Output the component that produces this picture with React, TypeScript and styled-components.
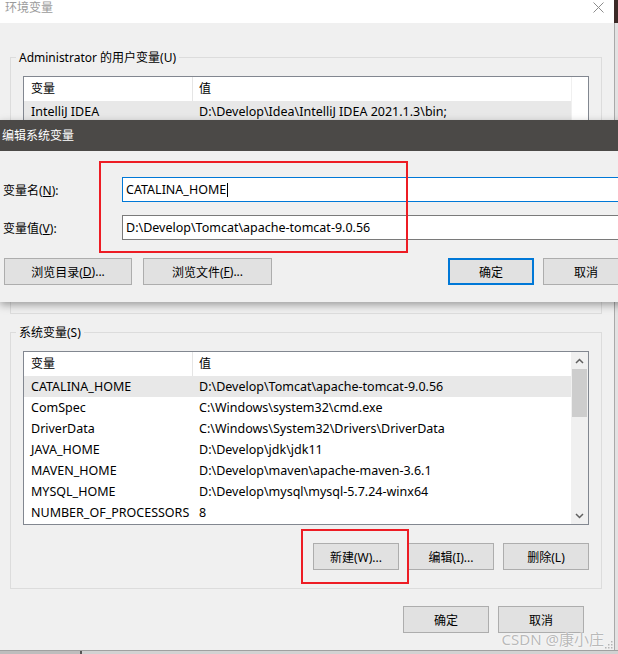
import React from 'react';
import styled, { createGlobalStyle } from 'styled-components';

const Global = createGlobalStyle`
  html, body { margin: 0; padding: 0; }
  body {
    width: 618px; height: 654px; overflow: hidden; background: #cfcfcf;
    font-family: "Noto Sans", "Noto Sans CJK SC", sans-serif;
    font-size: 12px; color: #000;
  }
  * { box-sizing: border-box; }
`;

const Screen = styled.div`
  position: relative;
  width: 618px;
  height: 654px;
  overflow: hidden;
  display: flex;
  flex-direction: column;
`;

const TopArea = styled.div`
  display: flex;
  height: 650px;
`;

const EnvWindow = styled.div`
  position: relative;
  width: 614px;
  display: flex;
  flex-direction: column;
  background: #f0f0f0;
`;

const EdgeStrip = styled.div`
  width: 4px;
  display: flex;
  flex-direction: column;
`;

const EdgeTop = styled.div`
  height: 23px;
  background: #3b2a27;
`;

const EdgeRest = styled.div`
  flex: 1;
  border-left: 1px solid #a9a9a9;
  background: #e2e2e2;
`;

const Taskbar = styled.div`
  height: 4px;
  display: flex;
  border-top: 1px solid #a0a0a0;
`;

const TaskLeft = styled.div`
  width: 80px;
  background: #bdbdbd;
`;

const TaskDivider = styled.div`
  width: 2px;
  background: #555;
`;

const TaskRest = styled.div`
  flex: 1;
  background: #d2d2d2;
`;

const TitleBar = styled.div`
  height: 23px;
  background: #fff;
  display: flex;
  justify-content: space-between;
  align-items: flex-start;
  padding: 0 10px 0 5px;
`;

const TitleText = styled.span`
  line-height: 15px;
  color: #9b9b9b;
`;

const CloseBtn = styled.span`
  margin-top: 2px;
  display: flex;
`;

const Body = styled.div`
  flex: 1;
  display: flex;
  flex-direction: column;
  padding: 0 12px 0 10px;
`;

const Group = styled.fieldset<{ $mt: number }>`
  margin: ${p => p.$mt}px 0 0 0;
  padding: 10px 12px 18px 12px;
  border: 1px solid #dcdcdc;
  min-width: 0;
  display: flex;
  flex-direction: column;
`;

const Legend = styled.legend`
  padding: 0 3px;
  margin-left: -7px;
  line-height: 17px;
  font-size: 12px;
`;

const ListBox = styled.div`
  height: 174px;
  border: 1px solid #828790;
  background: #fff;
  display: flex;
  overflow: hidden;
`;

const ListMain = styled.div`
  flex: 1;
  display: flex;
  flex-direction: column;
  min-width: 0;
`;

const HeaderRow = styled.div`
  height: 24px;
  display: grid;
  grid-template-columns: 169px 1fr;
  align-items: center;
  flex-shrink: 0;
`;

const HeaderCell = styled.div<{ $first?: boolean }>`
  height: 24px;
  line-height: 24px;
  padding-left: ${p => (p.$first ? 7 : 6)}px;
  border-right: ${p => (p.$first ? '1px solid #e5e5e5' : 'none')};
`;

const DataRow = styled.div<{ $selected?: boolean }>`
  height: 21px;
  line-height: 21px;
  display: grid;
  grid-template-columns: 169px 1fr;
  flex-shrink: 0;
  font-size: 12.5px;
  background: ${p => (p.$selected ? '#e8e8e8' : 'transparent')};
`;

const Cell = styled.div<{ $first?: boolean }>`
  padding-left: ${p => (p.$first ? 7 : 6)}px;
  white-space: nowrap;
  overflow: hidden;
`;

const ScrollCol = styled.div<{ $active: boolean }>`
  width: 17px;
  flex-shrink: 0;
  display: flex;
  flex-direction: column;
  background: ${p => (p.$active ? '#f0f0f0' : '#fff')};
  border-left: ${p => (p.$active ? 'none' : '1px solid #f0f0f0')};
`;

const ArrowBox = styled.div`
  height: 17px;
  display: flex;
  align-items: center;
  justify-content: center;
  flex-shrink: 0;
`;

const Thumb = styled.div`
  height: 48px;
  margin: 0 1px;
  background: #cdcdcd;
  flex-shrink: 0;
`;

const ScrollSpace = styled.div`
  flex: 1;
`;

const ButtonRow = styled.div<{ $mt: number; $mr?: number }>`
  display: flex;
  justify-content: flex-end;
  gap: 9px;
  margin-top: ${p => p.$mt}px;
  margin-right: ${p => p.$mr ?? 0}px;
`;

const HiddenButtonSpace = styled.div`
  height: 27px;
  margin-top: 18px;
`;

const WinButton = styled.div<{ $w: number; $primary?: boolean }>`
  width: ${p => p.$w}px;
  height: 27px;
  display: flex;
  align-items: center;
  justify-content: center;
  background: #e1e1e1;
  border: ${p => (p.$primary ? '2px solid #0078d7' : '1px solid #adadad')};
  white-space: nowrap;
`;

const Dialog = styled.div`
  position: absolute;
  top: 120px;
  left: 0;
  width: 640px;
  display: flex;
  flex-direction: column;
  box-shadow: 0 3px 8px rgba(0, 0, 0, 0.35);
  z-index: 2;
`;

const DialogTitle = styled.div`
  height: 31px;
  line-height: 31px;
  padding-left: 2px;
  background: #4b4947;
  color: #fff;
`;

const DialogBody = styled.div`
  height: 151px;
  background: #f0f0f0;
  padding: 26px 11px 16px 3px;
  display: flex;
  flex-direction: column;
`;

const FieldRow = styled.div<{ $mt?: number }>`
  display: flex;
  align-items: center;
  margin-top: ${p => p.$mt ?? 0}px;
`;

const FieldLabel = styled.div`
  width: 119px;
  flex-shrink: 0;
  white-space: nowrap;
`;

const TextBox = styled.div<{ $focused?: boolean }>`
  flex: 1;
  height: 25px;
  display: flex;
  align-items: center;
  padding: 0 3px;
  font-size: 12.5px;
  background: #fff;
  border: 1px solid ${p => (p.$focused ? '#0078d7' : '#7a7a7a')};
  white-space: nowrap;
`;

const Caret = styled.span`
  display: inline-block;
  width: 1px;
  height: 14px;
  margin-left: 1px;
  background: #000;
`;

const DialogButtons = styled.div`
  display: flex;
  justify-content: space-between;
  margin-top: 18px;
  padding-left: 1px;
`;

const BtnGroup = styled.div<{ $gap: number }>`
  display: flex;
  gap: ${p => p.$gap}px;
`;

const Highlight = styled.div<{ $x: number; $y: number; $w: number; $h: number }>`
  position: absolute;
  left: ${p => p.$x}px;
  top: ${p => p.$y}px;
  width: ${p => p.$w}px;
  height: ${p => p.$h}px;
  border: 2px solid #ed1c24;
  z-index: 3;
`;

const Watermark = styled.div`
  position: absolute;
  right: 14px;
  bottom: 6px;
  font-size: 15px;
  line-height: 18px;
  color: #b9b9b9;
  text-shadow: 0 0 2px #fff, 0 0 1px #fff;
  z-index: 4;
`;

const Grip = styled.div`
  position: absolute;
  right: 1px;
  bottom: 1px;
  display: flex;
`;

const ChevronUp = () => (
  <svg width="9" height="6" viewBox="0 0 9 6">
    <path d="M1 5 L4.5 1.5 L8 5" fill="none" stroke="#606060" strokeWidth="1.5" />
  </svg>
);

const ChevronDown = () => (
  <svg width="9" height="6" viewBox="0 0 9 6">
    <path d="M1 1 L4.5 4.5 L8 1" fill="none" stroke="#606060" strokeWidth="1.5" />
  </svg>
);

const CloseIcon = () => (
  <svg width="11" height="11" viewBox="0 0 11 11">
    <path d="M0.5 0.5 L10.5 10.5 M10.5 0.5 L0.5 10.5" stroke="#8c8c8c" strokeWidth="1" />
  </svg>
);

const GripIcon = () => (
  <svg width="9" height="9" viewBox="0 0 9 9">
    {[[7, 1], [7, 4], [4, 4], [7, 7], [4, 7], [1, 7]].map(([x, y], i) => (
      <rect key={i} x={x} y={y} width="1.5" height="1.5" fill="#b5b5b5" />
    ))}
  </svg>
);

type Row = { name: string; value: string; selected?: boolean };

const userRows: Row[] = [
  { name: 'IntelliJ IDEA', value: 'D:\\Develop\\Idea\\IntelliJ IDEA 2021.1.3\\bin;', selected: true },
];

const sysRows: Row[] = [
  { name: 'CATALINA_HOME', value: 'D:\\Develop\\Tomcat\\apache-tomcat-9.0.56', selected: true },
  { name: 'ComSpec', value: 'C:\\Windows\\system32\\cmd.exe' },
  { name: 'DriverData', value: 'C:\\Windows\\System32\\Drivers\\DriverData' },
  { name: 'JAVA_HOME', value: 'D:\\Develop\\jdk\\jdk11' },
  { name: 'MAVEN_HOME', value: 'D:\\Develop\\maven\\apache-maven-3.6.1' },
  { name: 'MYSQL_HOME', value: 'D:\\Develop\\mysql\\mysql-5.7.24-winx64' },
  { name: 'NUMBER_OF_PROCESSORS', value: '8' },
];

const VarList = ({ rows, scroll }: { rows: Row[]; scroll: boolean }) => (
  <ListBox>
    <ListMain>
      <HeaderRow>
        <HeaderCell $first>变量</HeaderCell>
        <HeaderCell>值</HeaderCell>
      </HeaderRow>
      {rows.map(r => (
        <DataRow key={r.name} $selected={r.selected}>
          <Cell $first>{r.name}</Cell>
          <Cell>{r.value}</Cell>
        </DataRow>
      ))}
    </ListMain>
    <ScrollCol $active={scroll}>
      {scroll && (
        <>
          <ArrowBox><ChevronUp /></ArrowBox>
          <Thumb />
          <ScrollSpace />
          <ArrowBox><ChevronDown /></ArrowBox>
        </>
      )}
    </ScrollCol>
  </ListBox>
);

export default function App() {
  return (
    <Screen>
      <Global />
      <TopArea>
        <EnvWindow>
          <TitleBar>
            <TitleText>环境变量</TitleText>
            <CloseBtn><CloseIcon /></CloseBtn>
          </TitleBar>
          <Body>
            <Group $mt={26}>
              <Legend>Administrator 的用户变量(U)</Legend>
              <VarList rows={userRows} scroll={false} />
              <HiddenButtonSpace />
            </Group>
            <Group $mt={10}>
              <Legend>系统变量(S)</Legend>
              <VarList rows={sysRows} scroll />
              <ButtonRow $mt={18}>
                <WinButton $w={86}>新建(W)...</WinButton>
                <WinButton $w={86}>编辑(I)...</WinButton>
                <WinButton $w={86}>删除(L)</WinButton>
              </ButtonRow>
            </Group>
            <ButtonRow $mt={17} $mr={18}>
              <WinButton $w={86}>确定</WinButton>
              <WinButton $w={86}>取消</WinButton>
            </ButtonRow>
          </Body>
          <Grip><GripIcon /></Grip>
        </EnvWindow>
        <EdgeStrip>
          <EdgeTop />
          <EdgeRest />
        </EdgeStrip>
      </TopArea>
      <Taskbar>
        <TaskLeft />
        <TaskDivider />
        <TaskRest />
      </Taskbar>

      <Dialog>
        <DialogTitle>编辑系统变量</DialogTitle>
        <DialogBody>
          <FieldRow>
            <FieldLabel>变量名(<u>N</u>):</FieldLabel>
            <TextBox $focused>CATALINA_HOME<Caret /></TextBox>
          </FieldRow>
          <FieldRow $mt={13}>
            <FieldLabel>变量值(<u>V</u>):</FieldLabel>
            <TextBox>D:\Develop\Tomcat\apache-tomcat-9.0.56</TextBox>
          </FieldRow>
          <DialogButtons>
            <BtnGroup $gap={11}>
              <WinButton $w={128}>浏览目录(<u>D</u>)...</WinButton>
              <WinButton $w={129}>浏览文件(<u>F</u>)...</WinButton>
            </BtnGroup>
            <BtnGroup $gap={9}>
              <WinButton $w={86} $primary>确定</WinButton>
              <WinButton $w={86}>取消</WinButton>
            </BtnGroup>
          </DialogButtons>
        </DialogBody>
      </Dialog>

      <Highlight $x={99} $y={161} $w={309} $h={92} />
      <Highlight $x={301} $y={529} $w={108} $h={55} />
      <Watermark>CSDN @康小庄</Watermark>
    </Screen>
  );
}
